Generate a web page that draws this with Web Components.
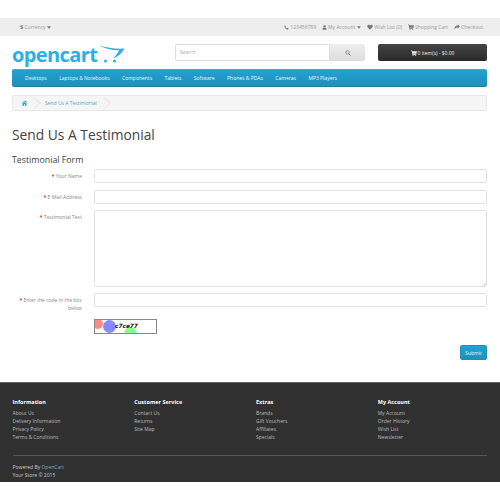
<!DOCTYPE html>
<html>
<head>
<meta charset="utf-8">
<title>Send Us A Testimonial</title>
<style>
  html, body { margin: 0; padding: 0; background: #fff; }
  body { font-family: "Open Sans", sans-serif; font-size: 5px; color: #666; }
</style>
</head>
<body>
<store-topbar></store-topbar>
<store-header></store-header>
<store-nav></store-nav>
<store-breadcrumb label="Send Us A Testimonial"></store-breadcrumb>
<testimonial-form></testimonial-form>
<store-footer></store-footer>

<script>
const ICONS = {
  phone: `<svg viewBox="0 0 16 16" width="5" height="5"><path fill="currentColor" d="M3 1l3 3-1.500 2.200c1 2 2.300 3.300 4.300 4.300L11 9l4 3-1.500 2.500C12 15.500 9 15 5.500 11.500S.5 5 1.500 3z"/></svg>`,
  user: `<svg viewBox="0 0 16 16" width="5" height="5"><circle cx="8" cy="4.500" r="3.800" fill="currentColor"/><path fill="currentColor" d="M1.500 15c0-4 1.500-6.500 3.500-6.500 1 .8 2 1.100 3 1.100s2-.3 3-1.100c2 0 3.500 2.500 3.500 6.500z"/></svg>`,
  heart: `<svg viewBox="0 0 16 16" width="6" height="6"><path fill="currentColor" d="M8 15L1.800 8.500C-.5 6 .8 1.800 4.300 1.800 6 1.800 7.300 2.800 8 4c.7-1.200 2-2.200 3.700-2.200 3.500 0 4.800 4.200 2.500 6.700z"/></svg>`,
  cart: `<svg viewBox="0 0 16 16" width="6" height="6"><path fill="currentColor" d="M0 1.500h3l.5 2H16l-1.500 6.500H5l.4 1.500H14V13H4L2 3H0z"/><circle cx="5.500" cy="14.500" r="1.500" fill="currentColor"/><circle cx="12.500" cy="14.500" r="1.500" fill="currentColor"/></svg>`,
  share: `<svg viewBox="0 0 16 16" width="6" height="6"><path fill="currentColor" d="M10 1l6 5.500-6 5.500V9C5.500 9 3 10 1 14c0-6 3-9.500 9-10z"/></svg>`,
  search: `<svg viewBox="0 0 16 16" width="6" height="6"><circle cx="6.500" cy="6.500" r="4.700" fill="none" stroke="currentColor" stroke-width="2"/><path d="M10 10l5 5" stroke="currentColor" stroke-width="2.400"/></svg>`,
  home: `<svg viewBox="0 0 16 16" width="7" height="6"><path fill="currentColor" d="M8 1.500L0 8.500l1 1 7-6 7 6 1-1-3-2.600V2h-2v2.200zM2.500 10v5H6.500v-4h3v4h4v-5L8 5z"/></svg>`,
  caret: `<svg viewBox="0 0 8 5" width="4" height="3"><path fill="currentColor" d="M0 0h8L4 5z"/></svg>`
};

class StoreTopbar extends HTMLElement {
  constructor() {
    super();
    this.attachShadow({ mode: "open" });
    this.shadowRoot.innerHTML = `<style>${this.css}</style>
      <div class="left"><b>$</b> Currency ${ICONS.caret}</div>
      <div class="right">
        <span>${ICONS.phone} 123456789</span>
        <span>${ICONS.user} My Account ${ICONS.caret}</span>
        <span>${ICONS.heart} Wish List (0)</span>
        <span>${ICONS.cart} Shopping Cart</span>
        <span>${ICONS.share} Checkout</span>
      </div>`;
  }
  css = `
    :host {
      display: flex;
      justify-content: space-between;
      align-items: center;
      box-sizing: border-box;
      height: 18px;
      margin-top: 18px;
      padding: 0 17px 0 20px;
      background: #eee;
      color: #999;
      font-size: 5px;
    }
    .right { display: flex; gap: 6px; }
    span, .left { display: flex; align-items: center; gap: 1px; white-space: nowrap; }
    svg { color: #777; }
    span svg:last-child:not(:first-child) { margin-left: 1px; }
    .left b { color: #777; font-size: 6px; }
  `;
}

class StoreHeader extends HTMLElement {
  constructor() {
    super();
    this.attachShadow({ mode: "open" });
    this.shadowRoot.innerHTML = `<style>${this.css}</style>
      <div class="logo">
        <span class="word">opencart</span>
        <svg viewBox="0 0 26 18" width="26" height="18">
          <path fill="#2ab0e5" d="M0 .5c8 2.500 17 3.500 25.500 3-2.500 4.500-6 8-11.500 10 3-3 4.800-5.600 6.200-8.200C13.500 5.500 6 3.500 0 .5z"/>
          <circle cx="6.500" cy="16" r="1.500" fill="#2ab0e5"/>
          <circle cx="15.500" cy="16" r="1.500" fill="#2ab0e5"/>
        </svg>
      </div>
      <div class="search">
        <div class="field">Search</div>
        <div class="go">${ICONS.search}</div>
      </div>
      <div class="cart">${ICONS.cart} 0 item(s) - $0.00</div>`;
  }
  css = `
    :host {
      display: flex;
      align-items: flex-start;
      height: 33px;
      padding: 8px 13px 0 12px;
      box-sizing: border-box;
    }
    .logo {
      display: flex;
      align-items: flex-start;
      width: 163px;
      height: 22px;
      gap: 2px;
      padding-top: 1px;
      box-sizing: border-box;
    }
    .word {
      font-family: "Open Sans", sans-serif;
      font-size: 20px;
      font-weight: 700;
      line-height: 20px;
      letter-spacing: -.6px;
      color: #2ab0e5;
    }
    .search { display: flex; width: 190px; height: 17px; }
    .field {
      flex: 1;
      box-sizing: border-box;
      border: 1px solid #ddd;
      border-radius: 2px 0 0 2px;
      padding-left: 4px;
      line-height: 15px;
      color: #aaa;
    }
    .go {
      width: 35px;
      display: flex;
      align-items: center;
      justify-content: center;
      color: #777;
      background: linear-gradient(#eee, #ddd);
      border-radius: 0 2px 2px 0;
    }
    .cart {
      margin-left: 13px;
      flex: 1;
      height: 17px;
      display: flex;
      align-items: center;
      justify-content: center;
      gap: 1px;
      color: #eee;
      white-space: nowrap;
      background: linear-gradient(#444, #2a2a2a);
      border-radius: 2px;
    }
  `;
}

class StoreNav extends HTMLElement {
  constructor() {
    super();
    this.attachShadow({ mode: "open" });
    const items = ["Desktops", "Laptops & Notebooks", "Components", "Tablets", "Software", "Phones & PDAs", "Cameras", "MP3 Players"];
    this.shadowRoot.innerHTML = `<style>${this.css}</style>
      ${items.map((t) => `<span>${t.replace("&", "&amp;")}</span>`).join("")}`;
  }
  css = `
    :host {
      display: flex;
      align-items: center;
      gap: 12.500px;
      box-sizing: border-box;
      height: 18px;
      margin: 0 13px 0 12px;
      padding: 0 13px;
      color: #eef8fc;
      font-size: 5px;
      font-weight: 400;
      background: linear-gradient(#23a1d1, #1f90bb);
      border-radius: 2px;
      border-top: 1px solid #39aeda;
      border-bottom: 1px solid #1b7fa6;
    }
  `;
}

class StoreBreadcrumb extends HTMLElement {
  constructor() {
    super();
    this.attachShadow({ mode: "open" });
    this.shadowRoot.innerHTML = `<style>${this.css}</style>
      <div class="crumb home">${ICONS.home}</div>
      <div class="crumb text">${this.getAttribute("label")}</div>`;
  }
  css = `
    :host {
      display: flex;
      box-sizing: border-box;
      height: 16px;
      margin: 8px 13px 0 12px;
      background: #f5f5f5;
      border: 1px solid #e8e8e8;
      border-radius: 2px;
      color: #23a1d1;
      overflow: hidden;
    }
    .crumb { display: flex; align-items: center; position: relative; height: 14px; }
    .home { width: 24px; padding-left: 8px; box-sizing: border-box; }
    .text { padding-left: 8px; padding-right: 10px; color: #4ba9cd; }
    .crumb::after {
      content: "";
      position: absolute;
      top: 1px;
      right: -3px;
      width: 11px;
      height: 11px;
      transform: rotate(45deg) scale(.75);
      border-top: 1px solid #e4e4e4;
      border-right: 1px solid #e4e4e4;
    }
  `;
}

class FormRow extends HTMLElement {
  constructor() {
    super();
    this.attachShadow({ mode: "open" });
    const tall = this.hasAttribute("tall");
    this.shadowRoot.innerHTML = `<style>${this.css}</style>
      <label><i>*</i> ${this.getAttribute("label")}</label>
      <div class="box ${tall ? "tall" : ""}">${tall ? `<svg viewBox="0 0 6 6" width="4" height="4"><path d="M5.500 1L1 5.500M5.500 3.500L3.500 5.500" stroke="#999" stroke-width=".8"/></svg>` : ""}</div>`;
  }
  css = `
    :host { display: flex; gap: 12px; margin-bottom: 6.500px; }
    label {
      flex: 0 0 70px;
      text-align: right;
      color: #888;
      font-size: 5px;
      line-height: 8.300px;
      padding-top: 3px;
      box-sizing: border-box;
    }
    i { color: #d33; font-style: normal; font-weight: 700; }
    .box {
      flex: 1;
      height: 14px;
      box-sizing: border-box;
      border: 1px solid #e2e2e2;
      border-radius: 2px;
      background: #fff;
      position: relative;
    }
    .box.tall { height: 76.500px; }
    svg { position: absolute; right: 0; bottom: 0; }
  `;
}

class CaptchaImage extends HTMLElement {
  constructor() {
    super();
    this.attachShadow({ mode: "open" });
    this.shadowRoot.innerHTML = `<style>${this.css}</style>
      <div class="pic">
        <span class="c red"></span>
        <span class="c blue"></span>
        <span class="c green"></span>
        <span class="code">c7ce77</span>
      </div>`;
  }
  css = `
    :host { display: block; width: 63px; }
    .pic {
      position: relative;
      box-sizing: border-box;
      height: 15px;
      border: 1px solid #888;
      background: #fff;
      overflow: hidden;
    }
    .c { position: absolute; border-radius: 50%; }
    .red { left: -2px; top: -1px; width: 10px; height: 10px; background: #f88; }
    .blue { left: 8px; top: 0; width: 13px; height: 13px; background: #88f; }
    .green { left: 29px; top: 7px; width: 13px; height: 13px; background: #8f8; }
    .code {
      position: absolute;
      left: 20px;
      top: 3px;
      font: italic 600 5.800px/7px "DejaVu Sans", sans-serif;
      color: #111;
    }
  `;
}

class TestimonialForm extends HTMLElement {
  constructor() {
    super();
    this.attachShadow({ mode: "open" });
    this.shadowRoot.innerHTML = `<style>${this.css}</style>
      <h1>Send Us A Testimonial</h1>
      <h2>Testimonial Form</h2>
      <form-row label="Your Name"></form-row>
      <form-row label="E-Mail Address"></form-row>
      <form-row label="Testimonial Text" tall></form-row>
      <form-row label="Enter the code in the box below"></form-row>
      <captcha-image></captcha-image>
      <div class="actions"><button type="button">Submit</button></div>`;
  }
  css = `
    :host { display: block; padding: 14px 13px 0 12px; height: 271px; box-sizing: border-box; }
    h1 {
      margin: 0;
      font-size: 13.800px;
      font-weight: 400;
      line-height: 20px;
      color: #444;
    }
    h2 {
      margin: 8px 0 0;
      font-size: 8.800px;
      font-weight: 400;
      line-height: 14px;
      color: #444;
    }
    form-row:first-of-type { margin-top: 2px; }
    captcha-image { margin: 4.500px 0 0 82px; }
    .actions { display: flex; justify-content: flex-end; margin-top: 11px; }
    button {
      width: 27px;
      height: 15px;
      padding: 0;
      border: 1px solid #1f90bb;
      border-radius: 2px;
      color: #eef8fc;
      font: 400 5px "Open Sans", sans-serif;
      background: linear-gradient(#23a1d1, #1f90bb);
    }
  `;
}

class FooterColumn extends HTMLElement {
  constructor() {
    super();
    this.attachShadow({ mode: "open" });
    this.shadowRoot.innerHTML = `<style>${this.css}</style>
      <h5>${this.getAttribute("title")}</h5><slot></slot>`;
  }
  css = `
    :host { display: block; flex: 0 0 121.750px; line-height: 8.300px; color: #bbb; font-size: 5px; }
    h5 { margin: 0 0 2.500px; font-size: 5.500px; line-height: 8px; font-weight: 700; color: #fff; }
    ::slotted(div) { white-space: nowrap; }
  `;
}

class StoreFooter extends HTMLElement {
  constructor() {
    super();
    this.attachShadow({ mode: "open" });
    const cols = {
      "Information": ["About Us", "Delivery Information", "Privacy Policy", "Terms &amp; Conditions"],
      "Customer Service": ["Contact Us", "Returns", "Site Map"],
      "Extras": ["Brands", "Gift Vouchers", "Affiliates", "Specials"],
      "My Account": ["My Account", "Order History", "Wish List", "Newsletter"]
    };
    this.shadowRoot.innerHTML = `<style>${this.css}</style>
      <div class="cols">
        ${Object.keys(cols).map((k) => `<footer-column title="${k}">${cols[k].map((l) => `<div>${l}</div>`).join("")}</footer-column>`).join("")}
      </div>
      <hr>
      <p>Powered By <a>OpenCart</a><br>Your Store &copy; 2015</p>`;
  }
  css = `
    :host {
      display: block;
      box-sizing: border-box;
      height: 100px;
      background: #303030;
      border-top: 1px solid #666;
      padding: 15px 13px 0 12.500px;
      color: #bbb;
      overflow: hidden;
    }
    .cols { display: flex; height: 50px; }
    hr { border: 0; border-top: 1px solid #555; margin: 7px 0 0; }
    p { margin: 7px 0 0; font-size: 5px; line-height: 8.300px; color: #ccc; }
    a { color: #6fb0cc; }
  `;
}

customElements.define("store-topbar", StoreTopbar);
customElements.define("store-header", StoreHeader);
customElements.define("store-nav", StoreNav);
customElements.define("store-breadcrumb", StoreBreadcrumb);
customElements.define("form-row", FormRow);
customElements.define("captcha-image", CaptchaImage);
customElements.define("testimonial-form", TestimonialForm);
customElements.define("footer-column", FooterColumn);
customElements.define("store-footer", StoreFooter);
</script>
</body>
</html>
